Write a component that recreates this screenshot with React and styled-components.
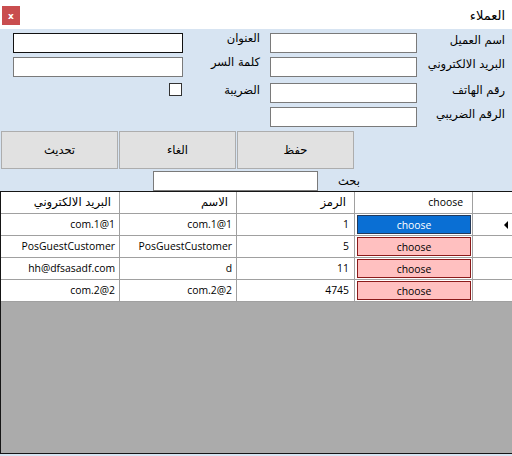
import React from "react";
import styled, { createGlobalStyle } from "styled-components";

const Global = createGlobalStyle`
  html, body { margin: 0; padding: 0; background: #d7e4f2; overflow: hidden; }
  * { box-sizing: border-box; }
`;

const FONT = `"Open Sans", "DejaVu Sans", sans-serif`;
const AR = `"DejaVu Sans", sans-serif`;

const Window = styled.div`
  width: 512px;
  height: 456px;
  display: flex;
  flex-direction: column;
  background: #d7e4f2;
  font-family: ${FONT};
  font-size: 12px;
  color: #000;
`;

const TitleBar = styled.div`
  height: 29px;
  background: #fff;
  display: flex;
  align-items: flex-start;
  justify-content: space-between;
  padding: 6px 7px 0 2px;
`;

const CloseBtn = styled.div`
  width: 18px;
  height: 19px;
  background: #c94d4f;
  color: #fff;
  font-family: ${AR};
  font-weight: bold;
  font-size: 9px;
  display: flex;
  align-items: center;
  justify-content: center;
`;

const Title = styled.div`
  font-family: ${AR};
  font-size: 13px;
  line-height: 18px;
  padding-top: 1px;
`;

const Form = styled.div`
  display: grid;
  grid-template-columns: 13px 170px 87px 147px 95px;
  grid-template-rows: 24px 26px 24px 20px;
  padding-top: 4px;
`;

const Input = styled.div`
  grid-column: ${(p) => p.$col};
  grid-row: ${(p) => p.$row};
  height: 20px;
  background: #fff;
  border: 1px solid ${(p) => (p.$focus ? "#111" : "#7a7a7a")};
  align-self: start;
`;

const Label = styled.div`
  grid-column: ${(p) => p.$col};
  grid-row: ${(p) => p.$row};
  font-family: ${AR};
  font-size: 11.5px;
  line-height: 14px;
  text-align: right;
  padding-right: ${(p) => p.$pr}px;
  margin-top: ${(p) => p.$mt || 0}px;
  align-self: start;
  white-space: nowrap;
`;

const Check = styled.div`
  grid-column: 2;
  grid-row: 3;
  justify-self: end;
  margin-right: 1px;
  width: 13px;
  height: 13px;
  background: #fff;
  border: 1px solid #333;
  align-self: start;
`;

const ButtonRow = styled.div`
  display: flex;
  gap: 1px;
  padding: 4px 0 0 1px;
`;

const Button = styled.div`
  width: 117px;
  height: 38px;
  background: #e1e1e1;
  border: 1px solid #adadad;
  display: flex;
  align-items: center;
  justify-content: center;
  font-family: ${AR};
  font-size: 11.5px;
`;

const SearchRow = styled.div`
  display: flex;
  align-items: flex-start;
  padding: 2px 0 0 153px;
  height: 22px;
`;

const SearchInput = styled.div`
  width: 165px;
  height: 20px;
  background: #fff;
  border: 1px solid #7a7a7a;
`;

const SearchLabel = styled.div`
  font-family: ${AR};
  font-size: 11.5px;
  margin-left: 20px;
  padding-top: 3px;
`;

const Grid = styled.div`
  flex: 1;
  margin-bottom: 2px;
  background: #ababab;
  border: 1px solid #151515;
  border-right: none;
`;

const Row = styled.div`
  display: grid;
  grid-template-columns: 119px 117px 118px 118px 1fr;
  height: 22px;
  background: #fff;
`;

const Cell = styled.div`
  border-right: 1px solid #a0a0a0;
  border-bottom: 1px solid #a0a0a0;
  text-align: right;
  padding-right: ${(p) => p.$pr ?? 4}px;
  font-family: ${(p) => (p.$ar ? AR : FONT)};
  font-size: ${(p) => (p.$ar ? "11.5px" : "10.4px")};
  line-height: 20px;
  white-space: nowrap;
  overflow: hidden;
`;

const BtnCell = styled.div`
  border-right: 1px solid #a0a0a0;
  border-bottom: 1px solid #a0a0a0;
  padding: 1px 1px 1px 2px;
  display: flex;
`;

const Choose = styled.div`
  flex: 1;
  background: ${(p) => (p.$sel ? "#0a6fd4" : "#ffc0c0")};
  border: 1px solid ${(p) => (p.$sel ? "#22395a" : "#8b1a1a")};
  color: ${(p) => (p.$sel ? "#fff" : "#000")};
  display: flex;
  align-items: center;
  justify-content: center;
  font-size: 10.4px;
`;

const HeadCell = styled.div`
  border-bottom: 1px solid #a0a0a0;
  display: flex;
  align-items: center;
  justify-content: flex-end;
  padding-right: 4px;
`;

const Arrow = styled.div`
  width: 0;
  height: 0;
  border-top: 4px solid transparent;
  border-bottom: 4px solid transparent;
  border-right: 4px solid #000;
`;

const rows = [
  { email: "com.1@1", name: "com.1@1", code: "1", sel: true },
  { email: "PosGuestCustomer", name: "PosGuestCustomer", code: "5" },
  { email: "hh@dfsasadf.com", name: "d", code: "11" },
  { email: "com.2@2", name: "com.2@2", code: "4745" },
];

export default function App() {
  return (
    <>
      <Global />
      <Window>
        <TitleBar>
          <CloseBtn>x</CloseBtn>
          <Title>العملاء</Title>
        </TitleBar>
        <Form>
          <Input $col={4} $row={1} />
          <Label $col={5} $row={1} $pr={7}>اسم العميل</Label>
          <Label $col={3} $row={1} $pr={10} $mt={-2}>العنوان</Label>
          <Input $col={2} $row={1} $focus />

          <Input $col={4} $row={2} />
          <Label $col={5} $row={2} $pr={7}>البريد الالكتروني</Label>
          <Label $col={3} $row={2} $pr={10} $mt={-2}>كلمة السر</Label>
          <Input $col={2} $row={2} />

          <Input $col={4} $row={3} />
          <Label $col={5} $row={3} $pr={7}>رقم الهاتف</Label>
          <Label $col={3} $row={3} $pr={10}>الضريبة</Label>
          <Check />

          <Input $col={4} $row={4} />
          <Label $col={5} $row={4} $pr={7}>الرقم الضريبي</Label>
        </Form>
        <ButtonRow>
          <Button>تحديث</Button>
          <Button>الغاء</Button>
          <Button>حفظ</Button>
        </ButtonRow>
        <SearchRow>
          <SearchInput />
          <SearchLabel>بحث</SearchLabel>
        </SearchRow>
        <Grid>
          <Row>
            <Cell $ar $pr={8}>البريد الالكتروني</Cell>
            <Cell $ar $pr={8}>الاسم</Cell>
            <Cell $ar $pr={8}>الرمز</Cell>
            <Cell $pr={9}>choose</Cell>
            <HeadCell />
          </Row>
          {rows.map((r, i) => (
            <Row key={i}>
              <Cell>{r.email}</Cell>
              <Cell>{r.name}</Cell>
              <Cell $pr={5}>{r.code}</Cell>
              <BtnCell>
                <Choose $sel={r.sel}>choose</Choose>
              </BtnCell>
              <HeadCell>{r.sel && <Arrow />}</HeadCell>
            </Row>
          ))}
        </Grid>
      </Window>
    </>
  );
}
